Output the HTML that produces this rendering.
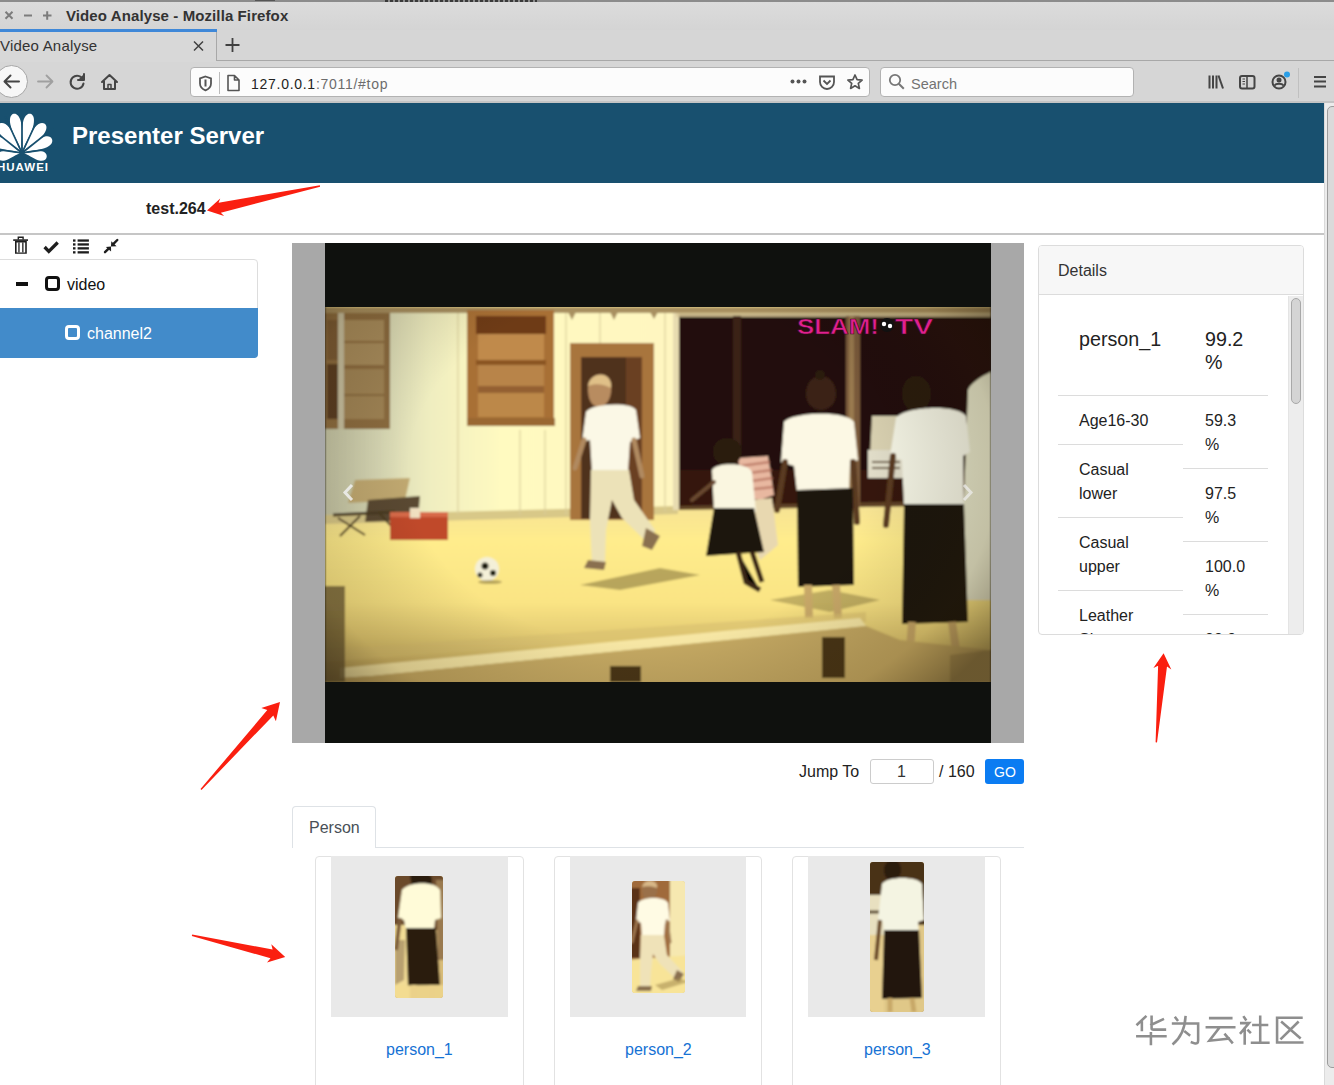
<!DOCTYPE html>
<html><head><meta charset="utf-8"><title>Video Analyse</title>
<style>
*{margin:0;padding:0;box-sizing:border-box}
html,body{width:1334px;height:1085px;overflow:hidden;background:#fff;font-family:"Liberation Sans",sans-serif}
.a{position:absolute}
#chrome{position:absolute;left:0;top:0;width:1334px;height:103px;background:#d6d6d6}
.t{position:absolute;white-space:nowrap;line-height:1}
</style></head><body>
<div id="chrome">
  <div class="a" style="left:0;top:0;width:1334px;height:2px;background:#8c8c8c"></div>
  <div class="a" style="left:385px;top:0;width:152px;height:2px;background:repeating-linear-gradient(90deg,#3a3a3a 0 3px,#8c8c8c 3px 5px)"></div><div class="a" style="left:255px;top:0;width:20px;height:1px;background:#555"></div>
  <div class="a" style="left:0;top:2px;width:1334px;height:28px;background:linear-gradient(#dcdcdc,#d4d4d4)"></div>
  <!-- window buttons -->
  <svg class="a" style="left:0;top:0" width="60" height="30">
    <g stroke="#7c7c7c" stroke-width="2" fill="none">
      <path d="M5.5 11.8l7 7M12.5 11.8l-7 7"/>
      <path d="M24 15.5h8"/>
      <path d="M43 15.5h8.5M47.2 11.2v8.6"/>
    </g>
  </svg>
  <div class="t" style="left:66px;top:8px;font-size:15px;font-weight:bold;color:#333;letter-spacing:0.1px">Video Analyse - Mozilla Firefox</div>
  <!-- tab strip -->
  <div class="a" style="left:0;top:29px;width:217px;height:3px;background:#3f88d8"></div>
  <div class="a" style="left:0;top:32px;width:217px;height:30px;background:#d8d8d8"></div>
  <div class="a" style="left:216px;top:32px;width:1px;height:29px;background:#a8a8a8"></div>
  <div class="a" style="left:217px;top:60px;width:1117px;height:1px;background:#a8a8a8"></div>
  <div class="t" style="left:0px;top:38px;font-size:15px;color:#333;letter-spacing:0.2px">Video Analyse</div>
  <svg class="a" style="left:190px;top:38px" width="18" height="16"><path d="M4 3.5l9 9M13 3.5l-9 9" stroke="#404040" stroke-width="1.5"/></svg>
  <svg class="a" style="left:222px;top:35px" width="22" height="20"><path d="M3.5 10h14M10.5 3v14" stroke="#404040" stroke-width="1.8"/></svg>
  <!-- nav bar -->
  <div class="a" style="left:0;top:101px;width:1334px;height:2px;background:#c4c4c4"></div>
  <div class="a" style="left:-5px;top:65px;width:33px;height:33px;border-radius:50%;background:#f7f7f7;border:1px solid #a6a6a6"></div>
  <svg class="a" style="left:0;top:70px" width="130" height="26">
    <g fill="none" stroke-linecap="round" stroke-linejoin="round">
      <path d="M5 11.5h14M10.5 5.5l-6 6 6 6" stroke="#454545" stroke-width="2"/>
      <path d="M38 11.5h14M46.5 5.5l6 6-6 6" stroke="#a0a0a0" stroke-width="1.8"/>
      <path d="M83 9.5a6.5 6.5 0 1 0 .5 4" stroke="#454545" stroke-width="2"/>
      <path d="M84 4v6h-6" stroke="#454545" stroke-width="2" fill="#454545"/>
      <path d="M102 12l7.5-7 7.5 7M104 11v8h11v-8" stroke="#454545" stroke-width="2"/>
      <path d="M108 19v-4.5h3V19" stroke="#454545" stroke-width="1.5"/>
    </g>
  </svg>
  <!-- url bar -->
  <div class="a" style="left:190px;top:67px;width:680px;height:30px;border-radius:4px;background:#fcfcfc;border:1px solid #b2b2b2"></div>
  <svg class="a" style="left:196px;top:72px" width="50" height="22">
    <path d="M9.5 4.5l5.5 2v5c0 3.5-2.6 5.7-5.5 6.8C6.6 17.2 4 15 4 11.5v-5z" fill="none" stroke="#555" stroke-width="1.8"/>
    <path d="M9.5 7.5v7" stroke="#555" stroke-width="2"/>
    <path d="M23.5 0v22" stroke="#bbb" stroke-width="1"/>
    <path d="M32 3.5h6.5l4.5 4.5v10.5h-11z M38.5 3.5v4.5h4.5" fill="none" stroke="#555" stroke-width="1.6" stroke-linejoin="round"/>
  </svg>
  <div class="t" style="left:251px;top:77px;font-size:14px;color:#222;letter-spacing:0.72px">127.0.0.1<span style="color:#6c6c6c">:7011/#top</span></div>
  <svg class="a" style="left:786px;top:70px" width="80" height="24">
    <g fill="#555"><circle cx="6.5" cy="11.5" r="2"/><circle cx="12.5" cy="11.5" r="2"/><circle cx="18.5" cy="11.5" r="2"/></g>
    <path d="M34 6.5h14v5.5a7 7 0 0 1-14 0z" fill="none" stroke="#555" stroke-width="1.8"/>
    <path d="M37.5 10.5l3.5 3.5 3.5-3.5" fill="none" stroke="#555" stroke-width="1.8"/>
    <path d="M69 5l2.1 4.6 5 .5-3.8 3.3 1.1 5-4.4-2.6-4.4 2.6 1.1-5-3.8-3.3 5-.5z" fill="none" stroke="#555" stroke-width="1.7" stroke-linejoin="round"/>
  </svg>
  <!-- search -->
  <div class="a" style="left:880px;top:67px;width:254px;height:30px;border-radius:4px;background:#fcfcfc;border:1px solid #b2b2b2"></div>
  <svg class="a" style="left:886px;top:72px" width="22" height="20"><circle cx="9" cy="8" r="5.2" fill="none" stroke="#777" stroke-width="1.8"/><path d="M12.8 11.8l5 5" stroke="#777" stroke-width="2"/></svg>
  <div class="t" style="left:911px;top:77px;font-size:14.5px;color:#737373">Search</div>
  <svg class="a" style="left:1200px;top:68px" width="134" height="30">
    <g stroke="#454545" fill="none">
      <path d="M9.5 7.5v13M13 7.5v13M16.5 7.5v13" stroke-width="2"/>
      <path d="M18.5 7.5l4.5 13" stroke-width="2"/>
      <rect x="40" y="8" width="14.5" height="12.5" rx="2" stroke-width="2"/>
      <path d="M47 8v12.5" stroke-width="1.5"/>
      <path d="M42.5 11h2.5M42.5 13.5h2.5M42.5 16h2.5" stroke-width="1"/>
      <circle cx="79" cy="14" r="6.5" stroke-width="2"/>
    </g>
    <circle cx="79" cy="12" r="2.5" fill="#454545"/>
    <path d="M74.5 17.5c1.5-2.5 7.5-2.5 9 0" stroke="#454545" stroke-width="2" fill="none"/>
    <circle cx="87" cy="6.5" r="3" fill="#2a9fe8"/>
    <path d="M98.5 -4v35" stroke="#c0c0c0" stroke-width="1"/>
    <path d="M114 9h12M114 13.5h12M114 18.5h12" stroke="#454545" stroke-width="2"/>
  </svg>
</div>

<div id="page" class="a" style="left:0;top:103px;width:1334px;height:982px;background:#fff;overflow:hidden">
  <!-- header -->
  <div class="a" style="left:0;top:0;width:1325px;height:80px;background:#18506f"></div>
  <svg class="a" style="left:0;top:5px" width="60" height="70"><g transform="translate(22 45)"><g fill="#fff"><path d="M0 0C-1.62 -11.40 -5.40 -19.00 -5.40 -28.12C-5.40 -34.96 -2.70 -38.00 0 -38.00C2.70 -38.00 5.40 -34.96 5.40 -28.12C5.40 -19.00 1.62 -11.40 0 0Z" transform="rotate(-12) translate(0 -2)"/><path d="M0 0C-1.62 -11.40 -5.40 -19.00 -5.40 -28.12C-5.40 -34.96 -2.70 -38.00 0 -38.00C2.70 -38.00 5.40 -34.96 5.40 -28.12C5.40 -19.00 1.62 -11.40 0 0Z" transform="rotate(12) translate(0 -2)"/><path d="M0 0C-1.68 -10.50 -5.60 -17.50 -5.60 -25.90C-5.60 -32.20 -2.80 -35.00 0 -35.00C2.80 -35.00 5.60 -32.20 5.60 -25.90C5.60 -17.50 1.68 -10.50 0 0Z" transform="rotate(-38) translate(0 -2)"/><path d="M0 0C-1.68 -10.50 -5.60 -17.50 -5.60 -25.90C-5.60 -32.20 -2.80 -35.00 0 -35.00C2.80 -35.00 5.60 -32.20 5.60 -25.90C5.60 -17.50 1.68 -10.50 0 0Z" transform="rotate(38) translate(0 -2)"/><path d="M0 0C-1.62 -9.30 -5.40 -15.50 -5.40 -22.94C-5.40 -28.52 -2.70 -31.00 0 -31.00C2.70 -31.00 5.40 -28.52 5.40 -22.94C5.40 -15.50 1.62 -9.30 0 0Z" transform="rotate(-65) translate(0 -2)"/><path d="M0 0C-1.62 -9.30 -5.40 -15.50 -5.40 -22.94C-5.40 -28.52 -2.70 -31.00 0 -31.00C2.70 -31.00 5.40 -28.52 5.40 -22.94C5.40 -15.50 1.62 -9.30 0 0Z" transform="rotate(65) translate(0 -2)"/><path d="M0 0C-1.44 -6.90 -4.80 -11.50 -4.80 -17.02C-4.80 -21.16 -2.40 -23.00 0 -23.00C2.40 -23.00 4.80 -21.16 4.80 -17.02C4.80 -11.50 1.44 -6.90 0 0Z" transform="rotate(-99) translate(0 -2)"/><path d="M0 0C-1.44 -6.90 -4.80 -11.50 -4.80 -17.02C-4.80 -21.16 -2.40 -23.00 0 -23.00C2.40 -23.00 4.80 -21.16 4.80 -17.02C4.80 -11.50 1.44 -6.90 0 0Z" transform="rotate(99) translate(0 -2)"/></g><g stroke="#18506f" stroke-width="1.7"><path d="M0 0L0.00 -40.00"/><path d="M0 0L16.90 -36.25"/><path d="M0 0L-16.90 -36.25"/><path d="M0 0L31.30 -24.90"/><path d="M0 0L-31.30 -24.90"/><path d="M0 0L39.61 -5.57"/><path d="M0 0L-39.61 -5.57"/></g><circle r="2.5" fill="#18506f"/></g></svg>
  <div class="t" style="left:-3px;top:59px;font-size:11.5px;font-weight:bold;color:#fff;letter-spacing:1px">HUAWEI</div>
  <div class="t" style="left:72px;top:21px;font-size:24px;font-weight:bold;color:#fff">Presenter Server</div>
  <!-- filename -->
  <div class="t" style="left:146px;top:98px;font-size:16px;font-weight:bold;color:#222">test.264</div>
  <div class="a" style="left:0;top:130px;width:1325px;height:2px;background:#c6c6c6"></div>

  <!-- tree toolbar -->
  <svg class="a" style="left:0;top:131px" width="125" height="25" viewBox="0 234 125 25">
    <g fill="#1e1e1e">
      <path d="M17.6 236.6h6.2v3h-1.4v-1.6h-3.4v1.6h-1.4z"/>
      <rect x="13.2" y="239.3" width="14.8" height="1.6"/>
      <path d="M15 241h11.8v12.8H15z M16.6 242.4v10h8.6v-10z" fill-rule="evenodd"/>
      <rect x="18.3" y="242.4" width="1.3" height="10"/><rect x="22.2" y="242.4" width="1.3" height="10"/>
    </g>
    <path d="M44.6 247l4.2 4.3 8.9-8.8" fill="none" stroke="#1e1e1e" stroke-width="3.3"/>
    <g fill="#1e1e1e">
      <rect x="73" y="239.4" width="2.5" height="2.3"/><rect x="77.6" y="239.4" width="11.3" height="2.3"/>
      <rect x="73" y="243.3" width="2.5" height="2.3"/><rect x="77.6" y="243.3" width="11.3" height="2.3"/>
      <rect x="73" y="247.2" width="2.5" height="2.3"/><rect x="77.6" y="247.2" width="11.3" height="2.3"/>
      <rect x="73" y="251.2" width="2.5" height="2.3"/><rect x="77.6" y="251.2" width="11.3" height="2.3"/>
    </g>
    <g stroke="#1e1e1e" stroke-width="2.4" stroke-linecap="round"><path d="M117.3 240l-3.6 3.6M105 252.2l3.6-3.6"/></g>
    <g fill="#1e1e1e"><path d="M111.3 241.3L116.6 246.2L111 246.6Z"/><path d="M105.8 246.9L111 246.6L111.1 251.6Z"/></g>
  </svg>
  <!-- tree -->
  <div class="a" style="left:-4px;top:156px;width:262px;height:99px;border:1px solid #ddd;border-radius:4px;background:#fff"></div>
  <div class="a" style="left:16px;top:179px;width:12px;height:4px;background:#111"></div>
  <div class="a" style="left:45px;top:173px;width:15px;height:15px;border:3px solid #111;border-radius:4px"></div>
  <div class="t" style="left:67px;top:174px;font-size:16px;color:#111">video</div>
  <div class="a" style="left:0;top:205px;width:258px;height:50px;background:#428bca;border-radius:0 0 4px 0"></div>
  <div class="a" style="left:65px;top:222px;width:15px;height:15px;border:3px solid #fff;border-radius:4px"></div>
  <div class="t" style="left:87px;top:223px;font-size:16px;color:#fff">channel2</div>

  <!-- video -->
  <div class="a" style="left:292px;top:140px;width:732px;height:500px;background:#a8a8a8"></div>
  <div id="vid" class="a" style="left:325px;top:140px;width:666px;height:500px;background:#0f110e;overflow:hidden"><svg width="666" height="500" viewBox="325 243 666 500" style="position:absolute;left:0;top:0">
  <defs>
    <linearGradient id="gWall" x1="325" y1="0" x2="680" y2="0" gradientUnits="userSpaceOnUse">
      <stop offset="0" stop-color="#c4c4a4"/>
      <stop offset="0.15" stop-color="#d8d8b4"/>
      <stop offset="0.3" stop-color="#f0eec0"/>
      <stop offset="0.5" stop-color="#fffac0"/>
      <stop offset="1" stop-color="#fff6c0"/>
    </linearGradient>
    <linearGradient id="gGround" x1="0" y1="505" x2="0" y2="682" gradientUnits="userSpaceOnUse">
      <stop offset="0" stop-color="#f6e294"/>
      <stop offset="0.2" stop-color="#ffec8c"/>
      <stop offset="0.55" stop-color="#fae484"/>
      <stop offset="0.75" stop-color="#e2ca72"/>
      <stop offset="1" stop-color="#b89c58"/>
    </linearGradient>
    <radialGradient id="gVig" cx="640" cy="470" r="420" gradientUnits="userSpaceOnUse" gradientTransform="translate(640 470) scale(1 0.75) translate(-640 -470)">
      <stop offset="0.55" stop-color="#000" stop-opacity="0"/>
      <stop offset="0.85" stop-color="#2a1a00" stop-opacity="0.18"/>
      <stop offset="1" stop-color="#1a1000" stop-opacity="0.45"/>
    </radialGradient>
    <filter id="blr" x="-5%" y="-5%" width="110%" height="110%"><feGaussianBlur stdDeviation="1.2"/></filter>
    <filter id="blr2"><feGaussianBlur stdDeviation="2.5"/></filter>
    <clipPath id="imgClip"><rect x="325" y="307" width="666" height="375"/></clipPath>
  </defs>
  <rect x="325" y="243" width="666" height="500" fill="#0f110e"/>
  <g clip-path="url(#imgClip)">
    <g filter="url(#blr)">
    <!-- ground -->
    <rect x="325" y="300" width="666" height="390" fill="url(#gGround)"/>
    <!-- wall -->
    <path d="M325 307H678V512L560 516L325 522Z" fill="url(#gWall)"/>
    <!-- wall base strip -->
    <path d="M325 515L678 506V514L325 524Z" fill="#d8c888"/>
    <!-- plank lines on wall -->
    <g stroke="#d8cc98" stroke-width="1.5" opacity="0.7">
      <path d="M458 310V515M566 310V515M600 310V515M625 420V512M665 310V512M520 430V515M545 430V515"/>
    </g>
    <!-- roof edge -->
    
    <!-- dark opening -->
    <path d="M676 314H991V500L676 506Z" fill="#221008"/>
    <path d="M676 470H991V505L676 510Z" fill="#3a1c0a" opacity="0.8"/>
    <rect x="673" y="312" width="6" height="198" fill="#e8dcb0"/>
    <rect x="325" y="307" width="666" height="6" fill="#a89060"/>
    <path d="M568 312l4 8 4-8zM610 312l4 8 4-8zM650 312l4 7 4-7z" fill="#a89060"/>
    <rect x="676" y="313" width="315" height="4" fill="#d8c898" opacity="0.85"/>
    <!-- poles -->
    <rect x="733" y="316" width="8" height="190" fill="#3a2418"/>
    <rect x="846" y="316" width="14" height="190" fill="#7a5a3a"/>
    <rect x="849" y="316" width="5" height="190" fill="#9a7a50"/>
    <!-- car -->
    <path d="M872 416h30v40h-32z" fill="#d8d0b0"/>
    <path d="M868 450h36v28h-36z" fill="#e0dcc8"/>
    <path d="M872 462h28M872 468h28" stroke="#6a5a40" stroke-width="2"/>
    <!-- right white figure -->
    <path d="M968 390C972 380 991 372 991 372V600H962C962 540 966 450 968 390Z" fill="#e4e4c8"/>
    <!-- left window -->
    <rect x="325" y="313" width="65" height="116" fill="#8c6c40"/>
    <rect x="327" y="320" width="11" height="40" fill="#7a5a34"/>
    <rect x="327" y="364" width="11" height="55" fill="#5a3c20"/>
    <rect x="344" y="320" width="40" height="45" fill="#a88c5c"/>
    <rect x="344" y="369" width="40" height="50" fill="#a08454"/>
    <rect x="338" y="313" width="6" height="116" fill="#c8c0a0"/>
    <g stroke="#806034" stroke-width="1.5"><path d="M344 342h40M344 395h40"/></g>
    <!-- middle window -->
    <rect x="467" y="310" width="87" height="116" fill="#a87036"/>
    <rect x="476" y="316" width="70" height="18" fill="#6e3a14"/>
    <rect x="478" y="334" width="66" height="26" fill="#c08a4c"/>
    <rect x="476" y="360" width="70" height="5" fill="#8a5424"/>
    <rect x="478" y="365" width="66" height="21" fill="#b8844a"/>
    <rect x="478" y="386" width="66" height="7" fill="#946030"/>
    <rect x="478" y="393" width="66" height="24" fill="#bc8848"/>
    <rect x="467" y="418" width="88" height="8" fill="#9a6832"/>
    <!-- door -->
    <rect x="570" y="343" width="84" height="177" fill="#a8743c"/>
    <rect x="581" y="357" width="61" height="162" fill="#50301a"/>
    <rect x="626" y="357" width="16" height="162" fill="#6a4024"/>
    <!-- chair -->
    <path d="M355 480L410 478L405 500L348 503Z" fill="#c0a870"/>
    <path d="M368 500L420 496L418 520L365 522Z" fill="#5a4a30"/>
    <path d="M333 515L395 512" stroke="#4a3a20" stroke-width="3"/>
    <path d="M338 518L365 535M360 516L340 536M380 514L395 530" stroke="#4a3a20" stroke-width="2"/>
    <!-- red box -->
    <rect x="390" y="512" width="58" height="28" fill="#c04a2c"/>
    <rect x="390" y="512" width="58" height="5" fill="#d86a4a"/>
    <rect x="410" y="508" width="10" height="10" fill="#f0e0c0"/>
    <!-- ball -->
    <circle cx="487" cy="569" r="12" fill="#f4f0d8"/>
    <circle cx="485" cy="566" r="3.5" fill="#1a1a10"/>
    <circle cx="493" cy="573" r="3" fill="#1a1a10"/>
    <circle cx="480" cy="575" r="2.5" fill="#1a1a10"/>
    <ellipse cx="490" cy="582" rx="12" ry="2" fill="#8a7a40" opacity="0.6"/>
    <!-- shadows -->
    <path d="M580 585L660 568L700 575L620 590Z" fill="#8a7a40" opacity="0.6"/>
    <path d="M770 600L830 590L880 600L830 612Z" fill="#8a7a40" opacity="0.5"/>
    <!-- man -->
    <path d="M588 389C588 378 596 374 602 375C609 376 612 383 611 392C610 402 604 407 598 407C591 406 588 398 588 389Z" fill="#b88c60"/>
    <path d="M588 386C589 377 598 373 604 375C610 377 612 383 611 388C604 384 595 383 588 386Z" fill="#e0c088"/>
    <path d="M586 412C590 404 630 401 636 410L640 438L630 442L628 472L592 473L590 440L582 442Z" fill="#fbf8e6"/>
    <path d="M584 440L575 468" stroke="#b08a60" stroke-width="5" stroke-linecap="round"/>
    <path d="M634 440L642 476" stroke="#b08a60" stroke-width="5" stroke-linecap="round"/>
    <path d="M591 470L629 470L634 500L655 530L650 545L622 518L612 500L606 530L605 562L592 565L590 520Z" fill="#ece2b8"/>
    <path d="M588 560L606 562L604 570L584 568Z" fill="#8a7050"/>
    <path d="M646 528L660 536L652 550L642 546Z" fill="#8a7050"/>
    <!-- girl + kid -->
    <path d="M738 458L768 456L774 495L760 500L745 498Z" fill="#e8b8a0"/>
    <g stroke="#b06a58" stroke-width="2.5" opacity="0.7"><path d="M740 466L770 462M742 474L772 470M744 482L773 478M746 490L773 487"/></g>
    <path d="M752 500L772 498L778 545L760 560L752 540Z" fill="#e8d8b0"/>
    <path d="M713 452C713 442 720 438 727 438C735 438 742 444 742 452C742 460 735 465 727 465C719 465 713 460 713 452Z" fill="#2a1a10"/>
    <path d="M712 470C716 462 748 462 752 472L756 512L714 512Z" fill="#faf6e0"/>
    <path d="M714 482L692 500" stroke="#6a4a30" stroke-width="4" stroke-linecap="round"/>
    <path d="M714 508L754 508L764 552L706 556Z" fill="#1e140c"/>
    <path d="M738 552L746 582L760 590M752 552L762 582" stroke="#3a2818" stroke-width="5"/>
    <!-- woman 1 -->
    <path d="M806 394C806 382 813 376 821 376C829 376 836 383 836 394C836 404 829 410 821 410C813 410 806 404 806 394Z" fill="#3a2414"/>
    <circle cx="820" cy="375" r="5" fill="#2a1a10"/>
    <path d="M784 422C792 412 846 410 854 422L858 460L850 464L849 490L797 492L794 466L781 462Z" fill="#fcf8e4"/>
    <path d="M785 462L777 510" stroke="#5a3a20" stroke-width="6" stroke-linecap="round"/>
    <path d="M853 462L857 522" stroke="#5a3a20" stroke-width="6" stroke-linecap="round"/>
    <path d="M797 490L853 488L854 585L798 587Z" fill="#1e140c"/>
    <path d="M808 585L809 618M836 585L838 618" stroke="#c8a868" stroke-width="8"/>
    <!-- woman 2 -->
    <path d="M902 394C902 383 908 376 916 376C924 376 931 383 931 394C931 404 924 412 916 412C908 412 902 404 902 394Z" fill="#2a1a10"/>
    <path d="M896 418C904 406 958 404 966 416L970 452L963 456L964 504L904 506L902 460L890 456Z" fill="#f4f4e4"/>
    <path d="M893 456L886 525" stroke="#5a3a20" stroke-width="6" stroke-linecap="round"/>
    <path d="M904 504L964 504L968 622L902 624Z" fill="#1e140c"/>
    <path d="M912 622L910 650M952 622L956 650" stroke="#c8a868" stroke-width="8"/>
    <!-- bench plank -->
    <path d="M325 650L866 612L866 622L325 662Z" fill="#d8c070" opacity="0.6"/>
    <path d="M340 668L860 618L866 626L372 676L340 678Z" fill="#f6e6a4"/>
    <path d="M340 678L372 676L866 626L900 640L991 650V690H325V680Z" fill="#c4a862"/>
    <path d="M610 666h31v16h-31zM822 637h23v41h-23z" fill="#4a3418"/>
    <path d="M325 586h20v96h-20z" fill="#6a5a34" opacity="0.8"/>
    <path d="M950 655L991 650V682H950Z" fill="#8a7040" opacity="0.4"/>
    </g>
    <!-- vignette -->
    <rect x="325" y="307" width="666" height="375" fill="url(#gVig)"/>
    <!-- logo -->
    <text x="797" y="334" font-family="Liberation Sans" font-weight="bold" font-size="22" fill="#e0208e" stroke="#3a0a20" stroke-width="0.6" textLength="82" lengthAdjust="spacingAndGlyphs">SLAM!</text>
    <circle cx="887" cy="325" r="7" fill="#111"/><circle cx="884" cy="324" r="2.2" fill="#fff"/><circle cx="890" cy="326" r="2.2" fill="#fff"/>
    <text x="895" y="334" font-family="Liberation Sans" font-weight="bold" font-size="22" fill="#e0208e" stroke="#3a0a20" stroke-width="0.6" textLength="38" lengthAdjust="spacingAndGlyphs">TV</text>
  </g>
  <!-- carousel arrows -->
  <path d="M352 485l-7 7.5 7 7.5" fill="none" stroke="#f0f0f0" stroke-width="3" opacity="0.85"/>
  <path d="M964 485l7 7.5-7 7.5" fill="none" stroke="#f0f0f0" stroke-width="3" opacity="0.7"/>
</svg>
</div>

  <!-- details -->
  <div class="a" style="left:1038px;top:142px;width:266px;height:390px;border:1px solid #dcdcdc;border-radius:4px;background:#fff;overflow:hidden">
    <div class="a" style="left:0;top:0;width:264px;height:49px;background:#f7f7f7;border-bottom:1px solid #dcdcdc"></div>
    <div class="a" style="left:249px;top:50px;width:15px;height:339px;background:#ededed;border-left:1px solid #e4e4e4"></div>
    <div class="a" style="left:252px;top:52px;width:10px;height:106px;background:#d4d4d4;border:1px solid #a8a8a8;border-radius:5px"></div>
  </div>
  <div class="t" style="left:1058px;top:160px;font-size:16px;color:#333">Details</div>
  <div class="t" style="left:1079px;top:227px;font-size:19.7px;color:#222">person_1</div>
  <div class="t" style="left:1205px;top:227px;font-size:19.7px;color:#222">99.2</div>
  <div class="t" style="left:1205px;top:250px;font-size:19.7px;color:#222">%</div>
  <div class="a" style="left:1058px;top:292px;width:210px;height:1px;background:#dcdcdc"></div>
  <div class="t" style="left:1079px;top:306px;font-size:16px;color:#222;line-height:24px;width:100px;white-space:normal">Age16-30</div>
  <div class="a" style="left:1058px;top:341px;width:125px;height:1px;background:#dcdcdc"></div>
  <div class="t" style="left:1079px;top:355px;font-size:16px;color:#222;line-height:24px;white-space:normal">Casual<br>lower</div>
  <div class="a" style="left:1058px;top:414px;width:125px;height:1px;background:#dcdcdc"></div>
  <div class="t" style="left:1079px;top:428px;font-size:16px;color:#222;line-height:24px;white-space:normal">Casual<br>upper</div>
  <div class="a" style="left:1058px;top:487px;width:125px;height:1px;background:#dcdcdc"></div>
  <div class="a" style="left:1040px;top:490px;width:247px;height:41px;overflow:hidden">
    <div class="t" style="left:39px;top:11px;font-size:16px;color:#222;line-height:24px;white-space:normal">Leather<br>Shoes</div>
    <div class="t" style="left:165px;top:35px;font-size:16px;color:#222;line-height:24px">99.9</div>
  </div>
  <div class="t" style="left:1205px;top:306px;font-size:16px;color:#222;line-height:24px;white-space:normal">59.3<br>%</div>
  <div class="a" style="left:1183px;top:365px;width:85px;height:1px;background:#dcdcdc"></div>
  <div class="t" style="left:1205px;top:379px;font-size:16px;color:#222;line-height:24px;white-space:normal">97.5<br>%</div>
  <div class="a" style="left:1183px;top:438px;width:85px;height:1px;background:#dcdcdc"></div>
  <div class="t" style="left:1205px;top:452px;font-size:16px;color:#222;line-height:24px;white-space:normal">100.0<br>%</div>
  <div class="a" style="left:1183px;top:511px;width:85px;height:1px;background:#dcdcdc"></div>

  <!-- jump -->
  <div class="t" style="left:799px;top:661px;font-size:16px;color:#222">Jump To</div>
  <div class="a" style="left:870px;top:656px;width:64px;height:25px;border:1px solid #ccc;border-radius:3px;background:#fff"></div>
  <div class="t" style="left:897px;top:661px;font-size:16px;color:#333">1</div>
  <div class="t" style="left:939px;top:661px;font-size:16px;color:#222">/ 160</div>
  <div class="a" style="left:985px;top:656px;width:39px;height:25px;background:#0b7cf2;border-radius:3px"></div>
  <div class="t" style="left:994px;top:662px;font-size:14px;color:#fff">GO</div>

  <!-- tabs -->
  <div class="a" style="left:292px;top:744px;width:732px;height:1px;background:#dee2e6"></div>
  <div class="a" style="left:292px;top:703px;width:84px;height:42px;border:1px solid #dee2e6;border-bottom:none;border-radius:4px 4px 0 0;background:#fff"></div>
  <div class="t" style="left:309px;top:717px;font-size:16px;color:#495057">Person</div>

  <!-- cards -->
  <div class="a" style="left:315px;top:753px;width:209px;height:240px;border:1px solid #e2e2e2;border-radius:4px"></div>
  <div class="a" style="left:331px;top:753px;width:177px;height:161px;background:#e9e9e9"></div>
  <div class="t" style="left:386px;top:939px;font-size:16px;color:#1672d4">person_1</div>
  <div class="a" style="left:554px;top:753px;width:208px;height:240px;border:1px solid #e2e2e2;border-radius:4px"></div>
  <div class="a" style="left:570px;top:753px;width:176px;height:161px;background:#e9e9e9"></div>
  <div class="t" style="left:625px;top:939px;font-size:16px;color:#1672d4">person_2</div>
  <div class="a" style="left:792px;top:753px;width:209px;height:240px;border:1px solid #e2e2e2;border-radius:4px"></div>
  <div class="a" style="left:808px;top:753px;width:177px;height:161px;background:#e9e9e9"></div>
  <div class="t" style="left:864px;top:939px;font-size:16px;color:#1672d4">person_3</div>
  <div id="p1" class="a" style="left:395px;top:773px;width:48px;height:122px;border-radius:3px;overflow:hidden;background:#c9a860"><svg width="48" height="122" viewBox="395 876 48 122"><defs><filter id="pb"><feGaussianBlur stdDeviation="0.9"/></filter></defs>
<g filter="url(#pb)">
<rect x="390" y="870" width="60" height="130" fill="#d8bc78"/>
<rect x="390" y="870" width="60" height="60" fill="#6a4a2a"/>
<path d="M390 925L410 925L410 1000L390 1000Z" fill="#f2dc94"/>
<path d="M395 940L405 940L404 980L395 985Z" fill="#b8a070"/>
<path d="M436 880L445 880L445 960L438 960Z" fill="#9a7a50"/>
<path d="M410 876C412 870 428 870 432 878L432 888L412 888Z" fill="#2a1a10"/>
<path d="M402 890C408 882 434 880 440 890L441 918L435 920L434 930L406 930L404 920L398 918Z" fill="#fffbd8"/>
<path d="M400 918L396 950" stroke="#7a5a38" stroke-width="4"/>
<path d="M406 928L436 928L440 985L408 986Z" fill="#2a1c10"/>
<path d="M414 985L414 998M432 985L432 998" stroke="#d8b878" stroke-width="5"/>
<rect x="390" y="985" width="60" height="15" fill="#f4dc90" opacity="0.7"/>
</g></svg></div>
  <div id="p2" class="a" style="left:632px;top:778px;width:53px;height:112px;border-radius:3px;overflow:hidden;background:#e0c880"><svg width="53" height="112" viewBox="632 881 53 112"><defs><filter id="pb2"><feGaussianBlur stdDeviation="0.8"/></filter></defs>
<g filter="url(#pb2)">
<rect x="625" y="875" width="65" height="125" fill="#f0dca0"/>
<rect x="625" y="875" width="47" height="90" fill="#a06a3a"/>
<rect x="630" y="888" width="10" height="70" fill="#5a3018"/>
<rect x="670" y="875" width="20" height="95" fill="#f6e8b0"/>
<path d="M625 960L690 955V1000H625Z" fill="#f8e498"/>
<path d="M642 890C642 884 646 881 650 881C655 881 658 886 657 892C656 898 652 901 648 901C644 900 642 896 642 890Z" fill="#9a7048"/>
<path d="M642 887C643 882 648 880 652 881C656 882 658 885 657 888C653 886 646 886 642 887Z" fill="#d8b888"/>
<path d="M638 903C642 897 664 896 668 903L670 921L665 923L664 936L642 937L641 923L636 921Z" fill="#fffbe4"/>
<path d="M637 921L632 942" stroke="#a07850" stroke-width="3" stroke-linecap="round"/>
<path d="M667 921L670 942" stroke="#a07850" stroke-width="3" stroke-linecap="round"/>
<path d="M641 935L664 935L667 955L683 972L677 980L660 964L653 954L651 972L650 988L640 988L640 960Z" fill="#efe2b8"/>
<path d="M638 986L652 986L651 991L636 991Z" fill="#8a7050"/>
<path d="M677 970L684 974L679 982L673 979Z" fill="#8a7050"/>
<path d="M655 985L680 978L688 982L662 990Z" fill="#a89050" opacity="0.6"/>
</g></svg></div>
  <div id="p3" class="a" style="left:870px;top:759px;width:54px;height:150px;border-radius:3px;overflow:hidden;background:#b09050"><svg width="54" height="150" viewBox="870 862 54 150"><defs><filter id="pb3"><feGaussianBlur stdDeviation="0.9"/></filter></defs>
<g filter="url(#pb3)">
<rect x="865" y="855" width="65" height="160" fill="#e0c888"/>
<rect x="865" y="855" width="65" height="70" fill="#4a3018"/>
<path d="M865 895L884 895L884 935L865 935Z" fill="#e8e0c0"/>
<path d="M866 912h16" stroke="#5a4a30" stroke-width="3"/>
<path d="M865 935L884 935L884 1015L865 1015Z" fill="#e8d090"/>
<path d="M884 870C884 863 889 860 893 860C898 860 901 864 901 870C901 876 897 880 892 880C887 880 884 876 884 870Z" fill="#2a1a10"/>
<path d="M882 884C887 876 918 876 922 884L924 920L918 922L919 932L884 932L883 922L878 920Z" fill="#f4f4e2"/>
<path d="M880 920L876 960" stroke="#6a4a28" stroke-width="4"/>
<path d="M884 930L919 930L922 998L882 999Z" fill="#241810"/>
<path d="M890 998L890 1012M912 998L914 1012" stroke="#c8a868" stroke-width="5"/>
</g></svg></div>
  <!-- scrollbar -->
  <div class="a" style="left:1324px;top:0;width:10px;height:982px;background:#ececec;border-left:1px solid #dadada"></div>
  <div class="a" style="left:1327px;top:3px;width:12px;height:962px;background:#dadada;border:1px solid #9c9c9c;border-radius:5px"></div>
</div>
<!-- watermark -->
<svg class="a" style="left:1130px;top:1008px" width="180" height="44" viewBox="0 0 1334 326">
<g fill="none" stroke="#8e8e8e" stroke-width="19" stroke-linecap="butt" stroke-linejoin="miter">
<path d="M122 58L48 128M88 98V172M252 80L150 128M160 55V150Q160 160 175 160H268M45 210H272M155 178V276"/>
<path d="M332 65L356 96M310 115H505V240Q505 268 478 262L450 252M412 58Q405 200 315 270M402 170L446 205"/>
<path d="M585 75H760M560 142H782M665 142L588 242L742 226M700 190L762 262"/>
<path d="M840 60L862 92M815 112H882L815 192M850 142V272M870 160L896 186M905 126H1025M965 55V255M895 258H1035"/>
<path d="M1280 72H1090V255H1286M1120 100L1265 226M1250 100L1115 232"/>
</g></svg>
<!-- arrows -->
<svg class="a" style="left:0;top:0;pointer-events:none" width="1334" height="1085"><path d="M319.9 185.3 L218.6 202.7 L220.2 198.4 L207.0 210.5 L224.1 216.0 L220.8 212.8 L320.1 186.7Z" fill="#fa1f10"/><path d="M201.5 790.0 L273.3 715.4 L275.9 721.2 L280.0 702.0 L261.3 708.1 L267.3 710.1 L200.5 789.0Z" fill="#fa1f10"/><path d="M1157.0 742.5 L1167.0 666.5 L1171.3 669.4 L1163.6 653.2 L1153.4 667.9 L1158.1 665.8 L1155.6 742.3Z" fill="#fa1f10"/><path d="M191.8 936.0 L270.5 958.3 L267.0 962.4 L285.2 957.1 L271.3 944.3 L272.6 949.5 L192.2 934.6Z" fill="#fa1f10"/></svg>
</body></html>
